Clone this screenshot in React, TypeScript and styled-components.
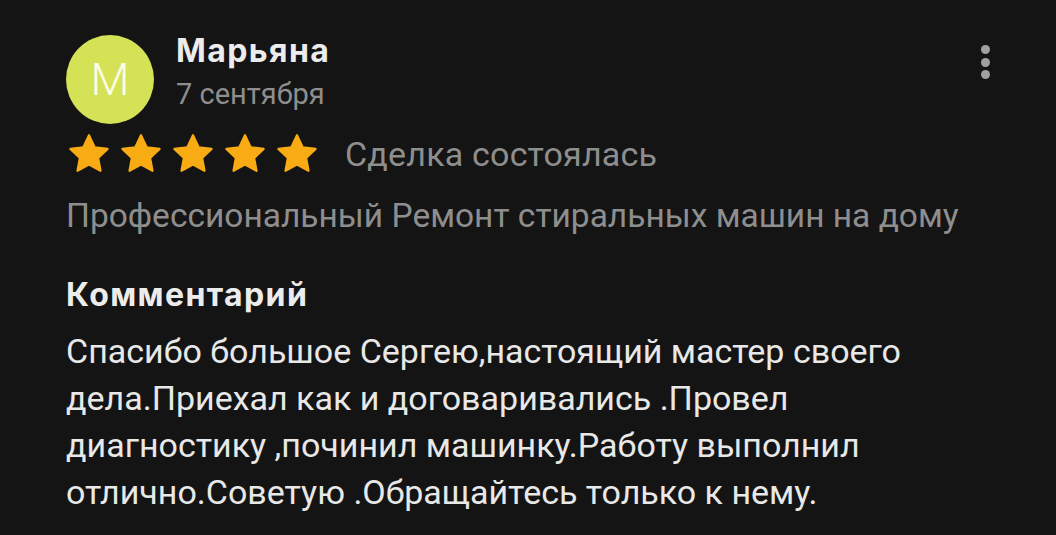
import React from "react";
import styled, { createGlobalStyle } from "styled-components";

const Global = createGlobalStyle`
  html, body { margin: 0; padding: 0; background: #141414; }
  body { font-family: Roboto, "Noto Sans", sans-serif; }
`;

const Page = styled.div`
  width: 1056px;
  height: 535px;
  background: #141414;
  box-sizing: border-box;
  padding: 35px 0 0 66px;
  position: relative;
  overflow: hidden;
`;

const Header = styled.div`
  display: flex;
  align-items: flex-start;
  gap: 22px;
`;

const Avatar = styled.div`
  width: 88px;
  height: 89px;
  border-radius: 50%;
  background: #d5e256;
  color: #fbfde9;
  display: flex;
  align-items: center;
  justify-content: center;
  font-family: Roboto, sans-serif;
  font-weight: 300;
  font-size: 45px;
`;

const NameBlock = styled.div`
  display: flex;
  flex-direction: column;
  margin-top: -2px;
`;

const Name = styled.div`
  font-family: Inter, Roboto, sans-serif;
  font-weight: 700;
  font-size: 32px;
  color: #ececec;
  letter-spacing: 1.4px;
  line-height: 36px;
`;

const DateText = styled.div`
  font-size: 29px;
  color: #8e8e8e;
  line-height: 40px;
  margin-top: 5px;
`;

const Kebab = styled.div`
  position: absolute;
  top: 45px;
  left: 981px;
  display: flex;
  flex-direction: column;
  gap: 3.5px;
`;

const Dot = styled.span`
  width: 9px;
  height: 9px;
  border-radius: 50%;
  background: #a0a0a0;
`;

const RatingRow = styled.div`
  display: flex;
  align-items: center;
  margin-top: 9px;
  height: 42px;
`;

const Stars = styled.div`
  display: flex;
  gap: 8px;
  margin-left: 1px;
`;

const Deal = styled.div`
  font-size: 34px;
  line-height: 42px;
  color: #8e8e8e;
  margin-left: 26px;
  letter-spacing: 0.2px;
`;

const Service = styled.div`
  font-size: 33.5px;
  color: #8e8e8e;
  margin-top: 21px;
  line-height: 40px;
`;

const CommentTitle = styled.div`
  font-family: Inter, Roboto, sans-serif;
  font-weight: 700;
  font-size: 32px;
  color: #ececec;
  margin-top: 39px;
  line-height: 40px;
  letter-spacing: 1.4px;
`;

const Body = styled.div`
  font-size: 34px;
  color: #e8e8e8;
  line-height: 47px;
  margin-top: 12.6px;
  white-space: nowrap;
  letter-spacing: 0;
`;

const Star = () => (
  <svg width="44" height="42" viewBox="0 0 24 23">
    <path
      d="M12 1.2l3.1 6.6 7.1.9-5.2 4.9 1.3 7.1L12 17.3l-6.3 3.4 1.3-7.1-5.2-4.9 7.1-.9z"
      fill="#f9ab14"
      stroke="#f9ab14"
      strokeWidth="1.2"
      strokeLinejoin="round"
    />
  </svg>
);

export default function App() {
  return (
    <Page>
      <Global />
      <Header>
        <Avatar>М</Avatar>
        <NameBlock>
          <Name>Марьяна</Name>
          <DateText>7 сентября</DateText>
        </NameBlock>
      </Header>
      <Kebab>
        <Dot />
        <Dot />
        <Dot />
      </Kebab>
      <RatingRow>
        <Stars>
          {[0, 1, 2, 3, 4].map((i) => (
            <Star key={i} />
          ))}
        </Stars>
        <Deal>Сделка состоялась</Deal>
      </RatingRow>
      <Service>Профессиональный Ремонт стиральных машин на дому</Service>
      <CommentTitle>Комментарий</CommentTitle>
      <Body>
        Спасибо большое Сергею,настоящий мастер своего
        <br />
        дела.Приехал как и договаривались .Провел
        <br />
        диагностику ,починил машинку.Работу выполнил
        <br />
        отлично.Советую .Обращайтесь только к нему.
      </Body>
    </Page>
  );
}
